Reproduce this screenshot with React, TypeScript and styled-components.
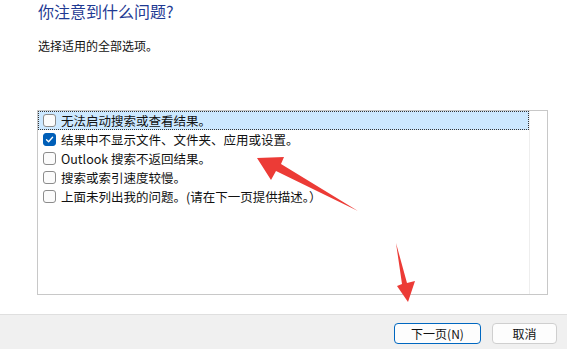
import styled, { createGlobalStyle } from "styled-components";

const GlobalStyle = createGlobalStyle`
  html, body {
    margin: 0;
    padding: 0;
    background: #ffffff;
  }
  body {
    font-family: "Noto Sans CJK SC", "Noto Sans", sans-serif;
  }
`;

const Page = styled.div`
  position: relative;
  width: 567px;
  height: 349px;
  display: flex;
  flex-direction: column;
  overflow: hidden;
  background: #ffffff;
`;

const Content = styled.div`
  flex: 1;
  display: flex;
  flex-direction: column;
  padding: 1px 19px 0 37px;
`;

const Title = styled.div`
  margin-left: 1px;
  font-size: 16px;
  line-height: 20px;
  color: #1f3a93;
`;

const Subtitle = styled.div`
  margin: 17px 0 0 1px;
  font-size: 12px;
  line-height: 16px;
  color: #111;
`;

const ListBox = styled.div`
  margin-top: 56px;
  height: 183px;
  border: 1px solid #c8c8c8;
  display: flex;
  background: #fff;
`;

const Rows = styled.div`
  flex: 1;
  display: flex;
  flex-direction: column;
`;

const Gutter = styled.div`
  width: 17px;
  border-left: 1px solid #eeeeee;
`;

const Row = styled.div<{ $focused?: boolean }>`
  height: 19px;
  box-sizing: border-box;
  display: flex;
  align-items: center;
  gap: 5px;
  padding-left: 4px;
  font-size: 12.5px;
  color: #111;
  white-space: nowrap;
  background: ${(p) => (p.$focused ? "#cce8ff" : "transparent")};
  border: 1px dotted ${(p) => (p.$focused ? "#333" : "transparent")};
`;

const Box = styled.span<{ $checked?: boolean }>`
  width: 13px;
  height: 13px;
  box-sizing: border-box;
  border-radius: 3px;
  border: 1px solid ${(p) => (p.$checked ? "#005fb8" : "#8c8c8c")};
  background: ${(p) => (p.$checked ? "#005fb8" : "#fbfbfb")};
  display: flex;
  align-items: center;
  justify-content: center;
  flex-shrink: 0;
`;

const Footer = styled.div`
  height: 35px;
  box-sizing: border-box;
  border-top: 1px solid #dfdfdf;
  background: #f0f0f0;
  display: flex;
  justify-content: flex-end;
  align-items: flex-start;
  gap: 11px;
  padding: 8px 10px 0 0;
`;

const Button = styled.button<{ $primary?: boolean; $w: number }>`
  width: ${(p) => p.$w}px;
  height: 21px;
  box-sizing: border-box;
  border-radius: 4px;
  border: 1px solid ${(p) => (p.$primary ? "#0067c0" : "#cfcfcf")};
  background: #fdfdfd;
  font-family: "Noto Sans CJK SC", "Noto Sans", sans-serif;
  font-size: 12px;
  line-height: 1;
  color: #111;
  padding: 0;
  display: flex;
  align-items: center;
  justify-content: center;
`;

const Annotations = styled.svg`
  position: absolute;
  left: 0;
  top: 0;
  pointer-events: none;
`;

const options = [
  { label: "无法启动搜索或查看结果。", checked: false },
  { label: "结果中不显示文件、文件夹、应用或设置。", checked: true },
  { label: "Outlook 搜索不返回结果。", checked: false },
  { label: "搜索或索引速度较慢。", checked: false },
  { label: "上面未列出我的问题。(请在下一页提供描述。）", checked: false },
];

function Check() {
  return (
    <svg width="9" height="9" viewBox="0 0 9 9">
      <path
        d="M1.5 4.8 L3.6 6.8 L7.6 2.2"
        fill="none"
        stroke="#fff"
        strokeWidth="1.3"
        strokeLinecap="round"
        strokeLinejoin="round"
      />
    </svg>
  );
}

export default function App() {
  return (
    <>
      <GlobalStyle />
      <Page>
        <Content>
          <Title>你注意到什么问题?</Title>
          <Subtitle>选择适用的全部选项。</Subtitle>
          <ListBox>
            <Rows>
              {options.map((o, i) => (
                <Row key={o.label} $focused={i === 0}>
                  <Box $checked={o.checked}>{o.checked && <Check />}</Box>
                  {o.label}
                </Row>
              ))}
            </Rows>
            <Gutter />
          </ListBox>
        </Content>
        <Footer>
          <Button $primary $w={87}>
            下一页(N)
          </Button>
          <Button $w={65}>取消</Button>
        </Footer>
        <Annotations width="567" height="349" viewBox="0 0 567 349">
          <polygon
            points="257,158 284,157 281,164 358,211 276,171 271,180"
            fill="#ec3b36"
          />
          <polygon
            points="396,243 407,283 415,281 408,302 397,286 402,284"
            fill="#ec3b36"
          />
        </Annotations>
      </Page>
    </>
  );
}
